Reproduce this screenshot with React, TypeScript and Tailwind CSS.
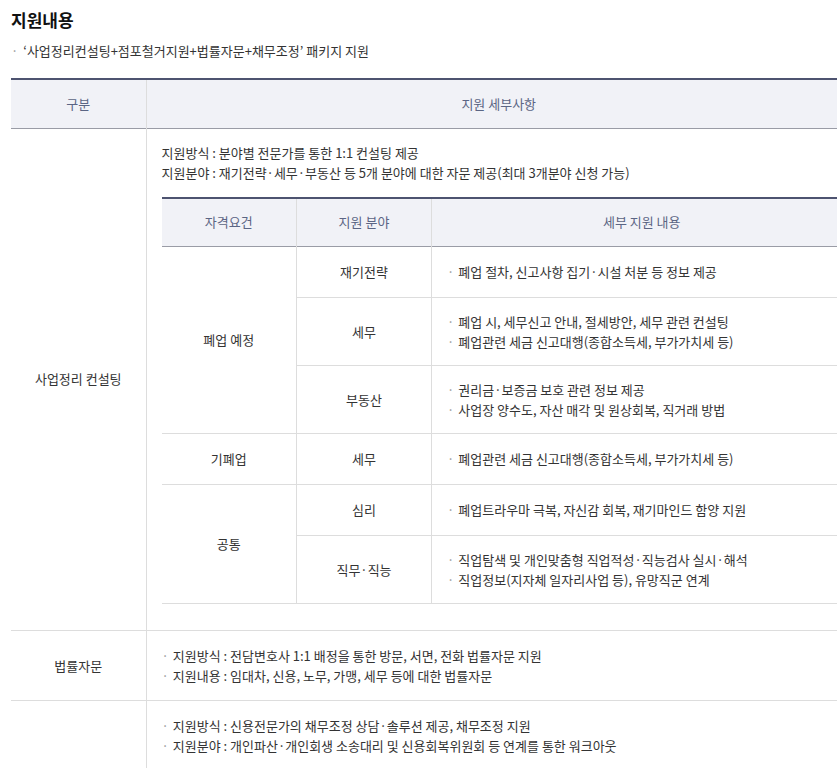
export default function App() {
  const B = ({ children }: { children: React.ReactNode }) => (
    <div className="flex items-start"><span className="text-[#999] mr-[4px]">·</span><span>{children}</span></div>
  );
  const td = "border-[#ddd] align-middle";
  return (
    <div className="w-[837px] h-[768px] overflow-hidden bg-white text-[13px] text-[#333] leading-[20px]" style={{ fontFamily: '"Noto Sans CJK KR", "Noto Sans", sans-serif' }}>
      <div className="pl-[11px] pt-[8px]">
        <h2 className="text-[17px] font-bold text-[#111] leading-[24px]">지원내용</h2>
        <div className="mt-[9px] flex"><span className="text-[#999] mr-[5px]">·</span>‘사업정리컨설팅+점포철거지원+법률자문+채무조정’ 패키지 지원</div>
        <table className="mt-[17px] w-[840px] border-collapse table-fixed border-t-2 border-[#4d5370]">
          <colgroup><col className="w-[135px]" /><col /></colgroup>
          <tbody>
            <tr className="h-[49px] bg-[#f1f2f7] text-[#5b6584] border-b border-[#9a9ca6]">
              <td className="text-center border-r border-[#ddd]">구분</td>
              <td className="text-center">지원 세부사항</td>
            </tr>
            <tr className="border-b border-[#ddd]">
              <td className={`${td} text-center border-r`}>사업정리 컨설팅</td>
              <td className="pl-[15px] pt-[14px] pb-[26px] align-top">
                <div>지원방식 : 분야별 전문가를 통한 1:1 컨설팅 제공</div>
                <div>지원분야 : 재기전략·세무·부동산 등 5개 분야에 대한 자문 제공(최대 3개분야 신청 가능)</div>
                <table className="mt-[14px] w-[690px] border-collapse table-fixed border-t-2 border-[#4d5370]">
                  <colgroup><col className="w-[135px]" /><col className="w-[135px]" /><col /></colgroup>
                  <tbody>
                    <tr className="h-[49px] bg-[#f1f2f7] text-[#5b6584] border-b border-[#9a9ca6]">
                      <td className="text-center border-r border-[#ddd]">자격요건</td>
                      <td className="text-center border-r border-[#ddd]">지원 분야</td>
                      <td className="text-center">세부 지원 내용</td>
                    </tr>
                    <tr className="h-[51px] border-b border-[#ddd]">
                      <td rowSpan={3} className={`${td} text-center border-r`}>폐업 예정</td>
                      <td className={`${td} text-center border-r`}>재기전략</td>
                      <td className={`${td} pl-[15px]`}><B>폐업 절차, 신고사항 집기·시설 처분 등 정보 제공</B></td>
                    </tr>
                    <tr className="h-[68px] border-b border-[#ddd]">
                      <td className={`${td} text-center border-r`}>세무</td>
                      <td className={`${td} pl-[15px]`}><B>폐업 시, 세무신고 안내, 절세방안, 세무 관련 컨설팅</B><B>폐업관련 세금 신고대행(종합소득세, 부가가치세 등)</B></td>
                    </tr>
                    <tr className="h-[68px] border-b border-[#ddd]">
                      <td className={`${td} text-center border-r`}>부동산</td>
                      <td className={`${td} pl-[15px]`}><B>권리금·보증금 보호 관련 정보 제공</B><B>사업장 양수도, 자산 매각 및 원상회복, 직거래 방법</B></td>
                    </tr>
                    <tr className="h-[51px] border-b border-[#ddd]">
                      <td className={`${td} text-center border-r`}>기폐업</td>
                      <td className={`${td} text-center border-r`}>세무</td>
                      <td className={`${td} pl-[15px]`}><B>폐업관련 세금 신고대행(종합소득세, 부가가치세 등)</B></td>
                    </tr>
                    <tr className="h-[51px] border-b border-[#ddd]">
                      <td rowSpan={2} className={`${td} text-center border-r`}>공통</td>
                      <td className={`${td} text-center border-r`}>심리</td>
                      <td className={`${td} pl-[15px]`}><B>폐업트라우마 극복, 자신감 회복, 재기마인드 함양 지원</B></td>
                    </tr>
                    <tr className="h-[68px] border-b border-[#ddd]">
                      <td className={`${td} text-center border-r`}>직무·직능</td>
                      <td className={`${td} pl-[15px]`}><B>직업탐색 및 개인맞춤형 직업적성·직능검사 실시·해석</B><B>직업정보(지자체 일자리사업 등), 유망직군 연계</B></td>
                    </tr>
                  </tbody>
                </table>
              </td>
            </tr>
            <tr className="h-[70px] border-b border-[#ddd]">
              <td className={`${td} text-center border-r`}>법률자문</td>
              <td className="pl-[15px] align-middle">
                <B>지원방식 : 전담변호사 1:1 배정을 통한 방문, 서면, 전화 법률자문 지원</B>
                <B>지원내용 : 임대차, 신용, 노무, 가맹, 세무 등에 대한 법률자문</B>
              </td>
            </tr>
            <tr className="h-[70px]">
              <td className={`${td} text-center border-r`}></td>
              <td className="pl-[15px] align-middle">
                <B>지원방식 : 신용전문가의 채무조정 상담·솔루션 제공, 채무조정 지원</B>
                <B>지원분야 : 개인파산·개인회생 소송대리 및 신용회복위원회 등 연계를 통한 워크아웃</B>
              </td>
            </tr>
          </tbody>
        </table>
      </div>
    </div>
  );
}
